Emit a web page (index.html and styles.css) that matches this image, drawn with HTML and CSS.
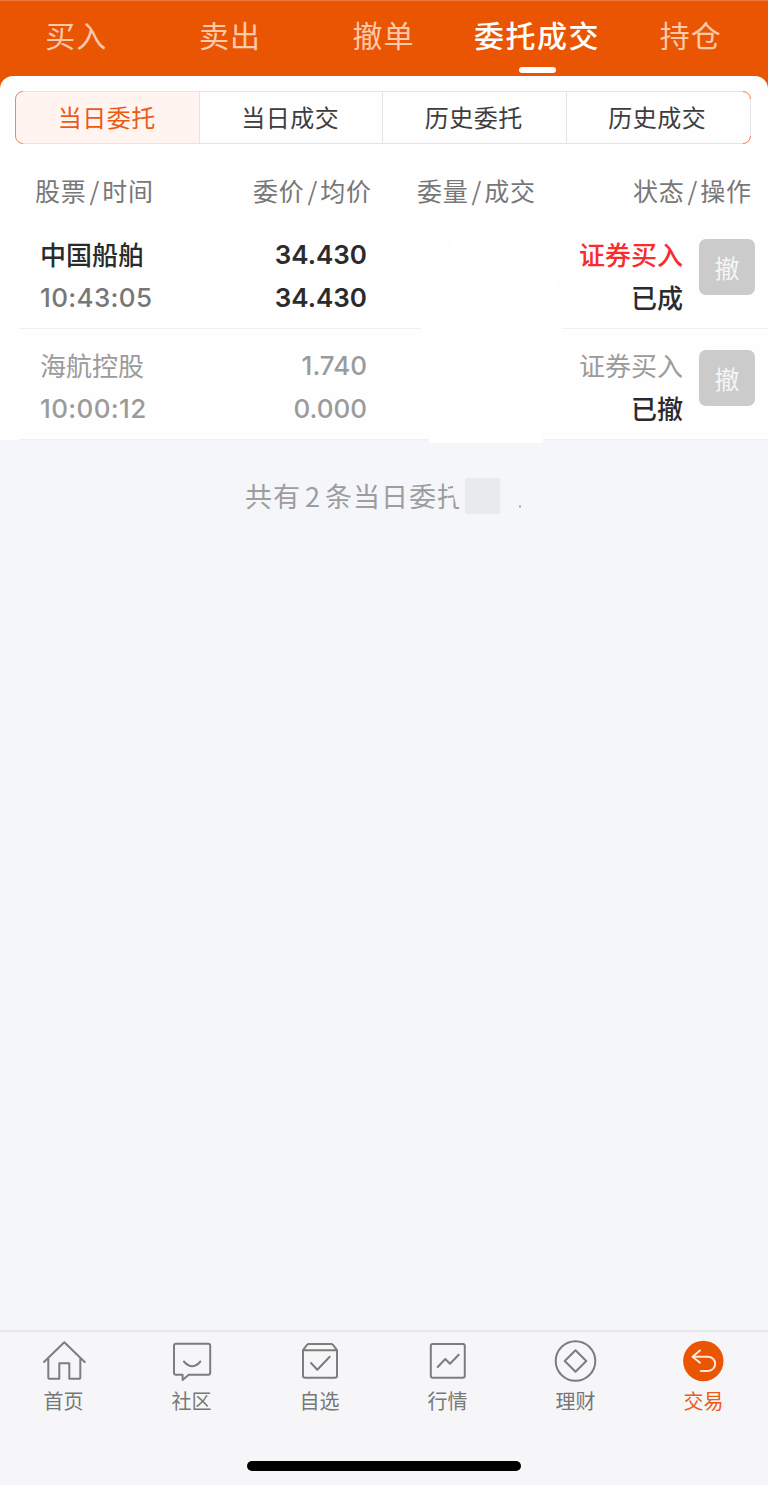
FILE: index.html
```html
<!DOCTYPE html>
<html lang="zh-CN">
<head>
<meta charset="utf-8">
<title>委托成交</title>
<link rel="stylesheet" href="styles.css">
</head>
<body>
<div class="app">
  <header class="tabs">
    <a class="tab">买入</a>
    <a class="tab">卖出</a>
    <a class="tab">撤单</a>
    <a class="tab tab-active">委托成交</a>
    <a class="tab">持仓</a>
  </header>
  <div class="panel-wrap">
    <section class="panel">
      <div class="segments">
        <a class="segment segment-active">当日委托</a>
        <a class="segment">当日成交</a>
        <a class="segment">历史委托</a>
        <a class="segment">历史成交</a>
      </div>
      <div class="columns">
        <span>股票<i>/</i>时间</span>
        <span>委价<i>/</i>均价</span>
        <span>委量<i>/</i>成交</span>
        <span>状态<i>/</i>操作</span>
      </div>
      <div class="order">
        <div class="name"><b>中国船舶</b><span class="num time">10:43:05</span></div>
        <div class="price num"><span>34.430</span><span>34.430</span></div>
        <div class="status"><b class="buy">证券买入</b><b>已成</b></div>
        <button class="cancel">撤</button>
      </div>
      <div class="order order-muted">
        <div class="name"><b>海航控股</b><span class="num time">10:00:12</span></div>
        <div class="price num"><span>1.740</span><span>0.000</span></div>
        <div class="status"><b class="buy">证券买入</b><b class="state">已撤</b></div>
        <button class="cancel">撤</button>
      </div>
      <div class="quantity-cover"></div>
    </section>
  </div>
  <main class="body">
    <p class="summary">共有<span class="count">2</span>条当日委托<span class="summary-cover"></span><span class="summary-block"></span><span class="summary-dot"></span></p>
  </main>
  <nav class="nav">
    <a class="nav-item">
      <svg viewBox="0 0 48 48"><path d="M4 25 24.300 5.300 44.700 25M8.300 21.500v18.700q0 1.600 1.600 1.600h9.400V26.300h10v15.500h9.400q1.600 0 1.600-1.600V21.500"/></svg>
      <span>首页</span>
    </a>
    <a class="nav-item">
      <svg viewBox="0 0 48 48"><path d="M8 6.800h32.200q2 0 2 2v27q0 2-2 2H20.700L14.600 43v-5.200H8q-2 0-2-2v-27q0-2 2-2ZM16 24.500q8.200 9.600 16.400 0"/></svg>
      <span>社区</span>
    </a>
    <a class="nav-item">
      <svg viewBox="0 0 48 48"><path d="M7 13.200 11 7.800q.8-.9 2-.9h22q1.200 0 2 .9l4 5.400M7 13.200h34v25.600q0 2-2 2H9q-2 0-2-2ZM15 26l6.300 6.800L33.700 19.700"/></svg>
      <span>自选</span>
    </a>
    <a class="nav-item">
      <svg viewBox="0 0 48 48"><rect x="6.800" y="7" width="34" height="33.800" rx="2"/><path d="m13.700 30 7.600-8 4.700 4.700 8.700-9"/></svg>
      <span>行情</span>
    </a>
    <a class="nav-item">
      <svg viewBox="0 0 48 48"><circle cx="23.500" cy="24" r="19.800"/><path d="m23.500 13.200 10.800 10.800-10.800 10.800L12.700 24Z"/></svg>
      <span>理财</span>
    </a>
    <a class="nav-item nav-active">
      <svg viewBox="0 0 48 48"><circle class="disc" cx="23.300" cy="24" r="20.200"/><path class="arrow" d="m20 13.500-7.500 6.200 7.500 6M13 19.700h15a7.150 7.150 0 0 1 0 14.300h-7.300"/></svg>
      <span>交易</span>
    </a>
  </nav>
  <div class="home-area"><div class="home-bar"></div></div>
</div>
</body>
</html>
```

FILE: styles.css
```css
* { box-sizing: border-box; }
body {
  margin: 0;
  font-family: "Noto Sans CJK SC", sans-serif;
  color: #2b2b2d;
}
.app {
  display: flex;
  flex-direction: column;
  width: 768px;
  height: 1485px;
  background: #f5f6f9;
  overflow: hidden;
}
.tabs {
  display: grid;
  grid-template-columns: repeat(5, 1fr);
  height: 76px;
  background: #ea5504;
  border-top: 1px solid #ee7838;
}
.tab {
  position: relative;
  padding-right: 1px;
  font-size: 30px;
  letter-spacing: 1px;
  line-height: 66px;
  text-align: center;
  white-space: nowrap;
  color: #fcc9ab;
}
.tab-active { color: #fff; font-weight: 500; letter-spacing: 1.5px; }
.tab-active::after {
  content: "";
  position: absolute;
  left: 58px;
  bottom: 3px;
  width: 37px;
  height: 6px;
  border-radius: 3px;
  background: #fff;
}
.panel-wrap { background: #ea5504; }
.panel {
  position: relative;
  height: 364px;
  padding-top: 15px;
  background: #fefefe;
  border-radius: 13px 13px 0 0;
}
.segments {
  position: relative;
  display: grid;
  grid-template-columns: repeat(4, 1fr);
  width: 736px;
  height: 53px;
  margin-left: 15px;
  border: 1px solid #e3e3ea;
  border-radius: 8px;
}
/* accent-coloured outline, shown at the rounded corners only */
.segments::before,
.segments::after {
  content: "";
  position: absolute;
  inset: -1px;
  border: 1px solid #f08a58;
  border-radius: 8px;
}
.segments::before { clip-path: polygon(0 0, 8px 0, 8px 8px, 0 8px, 0 45px, 8px 45px, 8px 100%, 0 100%, 0 45px, 1px 45px, 1px 8px, 0 8px); }
.segments::after { clip-path: polygon(728px 0, 100% 0, 100% 8px, 728px 8px, 728px 45px, 100% 45px, 100% 100%, 728px 100%); }
.segment {
  padding-right: 1px;
  font-size: 24px;
  letter-spacing: 0.5px;
  line-height: 49px;
  text-align: center;
  color: #3d3d40;
  border-right: 1px solid #e3e3ea;
}
.segment:nth-child(4) { border-right: 0; padding-right: 2px; }
.segment-active { background: #fff4f0; color: #ea5b14; border-radius: 7px 0 0 7px; }
.columns {
  display: grid;
  grid-template-columns: 218px 164px 216px 1fr;
  padding: 0 16px 0 35px;
  height: 73px;
  font-size: 25px;
  letter-spacing: 0.8px;
  line-height: 92px;
  color: #777;
}
.columns i { font-style: normal; padding: 0 2px 0 3px; }
.columns span { white-space: nowrap; }
.order {
  display: grid;
  grid-template-columns: 200px 147px 1fr 56px;
  height: 112px;
  margin-left: 19px;
  padding: 15px 13px 0 21px;
  font-size: 26px;
  line-height: 43px;
  border-bottom: 1px solid #eff0f3;
}
.order + .order { height: 111px; padding-top: 14px; }
.order b { font-weight: 500; }
.name, .price, .status { display: flex; flex-direction: column; }
.price { align-items: flex-end; padding: 1px 20px 0 0; font-weight: 600; }
.status { align-items: flex-end; padding-right: 16px; }
.num { font-family: Inter, "Noto Sans CJK SC", sans-serif; }
.time { padding-top: 1px; color: #777; font-weight: 500; letter-spacing: 0.35px; }
.status .buy { color: #fa2a2d; }
.order-muted, .order-muted .time { color: #9b9b9b; }
.order-muted .price { font-weight: 500; }
.order-muted .buy, .order-muted .name b { color: #9b9b9b; font-weight: 400; }
.order-muted .state { color: #2b2b2d; }
.cancel {
  width: 56px;
  height: 56px;
  margin-top: 7px;
  padding: 0;
  border: 0;
  border-radius: 7px;
  background: #cbcbcb;
  color: #f5f5f5;
  font: 25px/53px "Noto Sans CJK SC", sans-serif;
}
.quantity-cover {
  position: absolute;
  left: 421px;
  top: 140px;
  width: 142px;
  height: 227px;
  background: #fff;
  clip-path: polygon(28px 0, 105px 0, 134px 60px, 142px 120px, 142px 156px, 122px 160px, 122px 227px, 8px 227px, 8px 150px, 0 135px, 0 100px, 34px 55px);
}
.body { flex: 1; }
.summary {
  position: relative;
  margin: 36px 0 0 245px;
  font-size: 27px;
  letter-spacing: 1px;
  line-height: 40px;
  color: #9d9d9f;
}
.count { padding: 0 4px 0 4px; }
.summary-cover {
  position: absolute;
  left: 208px;
  top: 0;
  width: 60px;
  height: 40px;
  background: #f5f6f9;
  clip-path: polygon(0 0, 60px 0, 60px 40px, 7px 40px, 6px 31px, 3px 28px, 0 17px);
}
.summary-block {
  position: absolute;
  left: 220px;
  top: 2px;
  width: 35px;
  height: 36px;
  background: #e9eaec;
}
.summary-dot {
  position: absolute;
  left: 274px;
  top: 29px;
  width: 2px;
  height: 3px;
  background: #bcbdbf;
}
.nav {
  display: grid;
  grid-template-columns: repeat(6, 1fr);
  height: 90px;
  padding-top: 5px;
  border-top: 2px solid #e6e6eb;
  background: #f6f6f9;
}
.nav-item {
  display: flex;
  flex-direction: column;
  align-items: center;
  font-size: 20px;
  line-height: 31px;
  color: #777;
}
.nav-item span { padding-right: 1px; }
.nav-item svg {
  width: 48px;
  height: 48px;
  fill: none;
  stroke: #7d7d7d;
  stroke-width: 2;
  stroke-linejoin: round;
  stroke-linecap: round;
}
.nav-item .disc { fill: #ea5504; stroke: none; }
.nav-item .arrow { stroke: #fde6da; }
.nav-active { color: #ea5b14; }
.home-area { height: 65px; padding-top: 41px; background: #f6f6f9; }
.home-bar {
  width: 274px;
  height: 10px;
  margin: 0 auto;
  border-radius: 5px;
  background: #000;
}
```
